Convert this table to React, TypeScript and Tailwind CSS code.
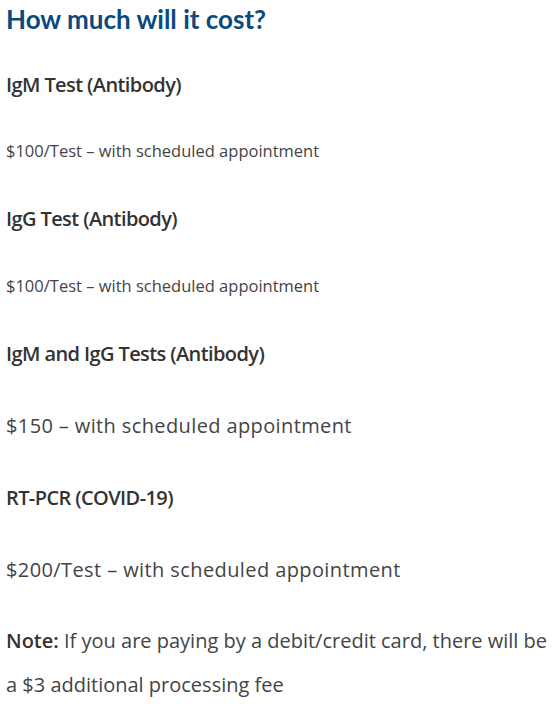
export default function App() {
  return (
    <div className="min-h-[711px] w-[559px] bg-white pl-[6px] pt-[4px] font-['Open_Sans',sans-serif] text-[#333]">
      <h2 className="font-['Lato',sans-serif] text-[26px] font-bold leading-[30px] text-[#0c4a7e]">
        How much will it cost?
      </h2>

      <h4 className="mt-[37px] text-[20px] font-semibold leading-[28px] tracking-[-0.6px] text-[#333]">
        IgM Test (Antibody)
      </h4>
      <p className="mt-[38px] text-[16.5px] leading-[28px] text-[#444]">
        $100/Test – with scheduled appointment
      </p>

      <h4 className="mt-[40px] text-[20px] font-semibold leading-[28px] tracking-[-0.6px]">
        IgG Test (Antibody)
      </h4>
      <p className="mt-[39px] text-[16.5px] leading-[28px] text-[#444]">
        $100/Test – with scheduled appointment
      </p>

      <h4 className="mt-[40px] text-[20px] font-semibold leading-[28px] tracking-[-0.6px]">
        IgM and IgG Tests (Antibody)
      </h4>
      <p className="mt-[36px] text-[20px] leading-[44px] tracking-[0.38px] text-[#444]">
        $150 – with scheduled appointment
      </p>

      <h4 className="mt-[36px] text-[20px] font-semibold leading-[28px] tracking-[-0.6px]">
        RT-PCR (COVID-19)
      </h4>
      <p className="mt-[36px] text-[20px] leading-[44px] tracking-[0.4px] text-[#444]">
        $200/Test – with scheduled appointment
      </p>

      <p className="mt-[27px] text-[20px] leading-[44px] text-[#444]">
        <strong className="font-semibold text-[#333]">Note:</strong> If you are paying by a debit/credit card, there will be a $3
        additional processing fee
      </p>
    </div>
  );
}
